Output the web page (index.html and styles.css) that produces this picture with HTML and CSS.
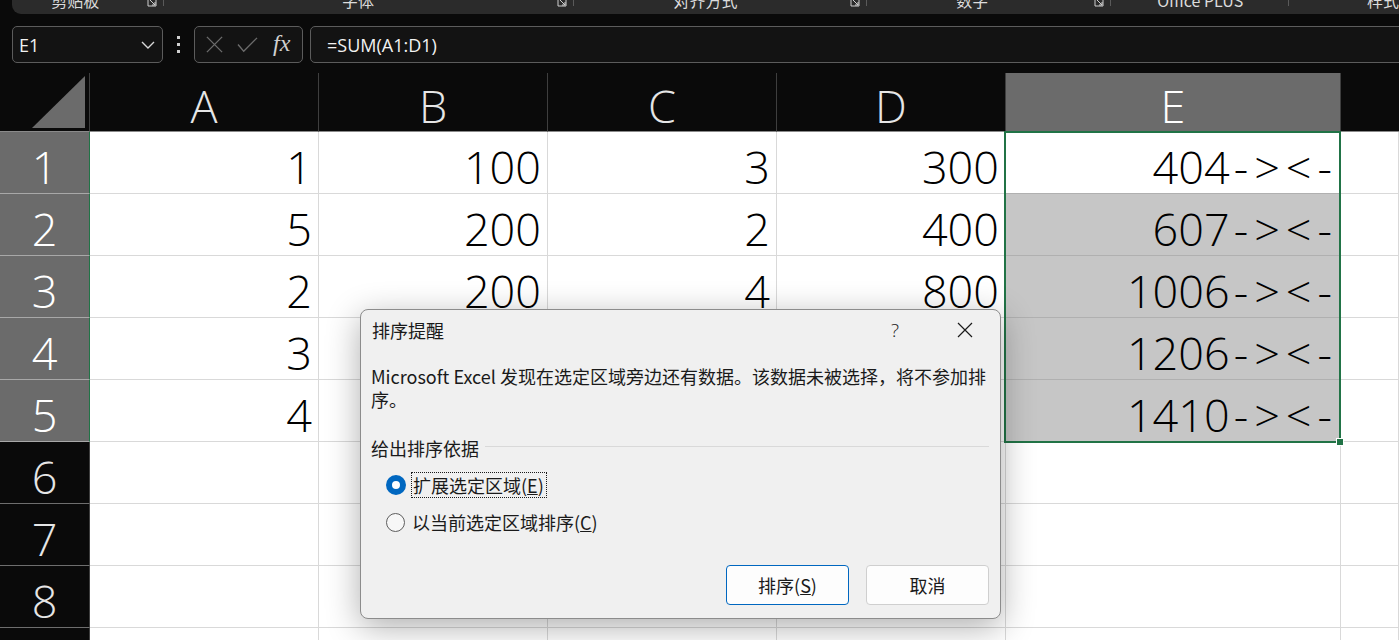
FILE: index.html
```html
<!DOCTYPE html>
<html lang="zh-CN">
<head>
<meta charset="utf-8">
<title>Excel 排序提醒</title>
<link rel="stylesheet" href="styles.css">
</head>
<body>
<div class="ribbon">
  <div class="grp g1"><span class="lbl">剪贴板</span><svg class="launch" viewBox="0 0 10 10"><path d="M1 1h8v8h-8z M3 3l5 5 M5 8h3v-3" fill="none" stroke="#cfcfcf" stroke-width="1"/></svg></div>
  <div class="grp g2"><span class="lbl">字体</span><svg class="launch" viewBox="0 0 10 10"><path d="M1 1h8v8h-8z M3 3l5 5 M5 8h3v-3" fill="none" stroke="#cfcfcf" stroke-width="1"/></svg></div>
  <div class="grp g3"><span class="lbl">对齐方式</span><svg class="launch" viewBox="0 0 10 10"><path d="M1 1h8v8h-8z M3 3l5 5 M5 8h3v-3" fill="none" stroke="#cfcfcf" stroke-width="1"/></svg></div>
  <div class="grp g4"><span class="lbl">数字</span><svg class="launch" viewBox="0 0 10 10"><path d="M1 1h8v8h-8z M3 3l5 5 M5 8h3v-3" fill="none" stroke="#cfcfcf" stroke-width="1"/></svg></div>
  <div class="grp g5"><span class="lbl">Office PLUS</span></div>
  <div class="grp g6"><span class="lbl">样式</span></div>
</div>

<div class="fbar">
  <div class="namebox">
    <span class="ref">E1</span>
    <svg class="chev" viewBox="0 0 14 8"><path d="M1 1l6 6 6-6" fill="none" stroke="#d8d8d8" stroke-width="1.4"/></svg>
  </div>
  <div class="grip"><i></i><i></i><i></i></div>
  <div class="fxbox">
    <svg class="ico" viewBox="0 0 20 20"><path d="M2 2l16 16M18 2L2 18" fill="none" stroke="#6c6c6c" stroke-width="1.4"/></svg>
    <svg class="ico" viewBox="0 0 22 20"><path d="M1 10l6 7L21 3" fill="none" stroke="#6c6c6c" stroke-width="1.4"/></svg>
    <span class="fx">fx</span>
  </div>
  <div class="formula">=SUM(A1:D1)</div>
</div>

<div class="sheet">
  <div class="corner"><svg viewBox="0 0 54 53"><path d="M53 0V52H0z" fill="#6b6b6b"/></svg></div>
  <div class="ch">A</div><div class="ch">B</div><div class="ch">C</div><div class="ch">D</div><div class="ch on">E</div><div class="ch blank"></div>

  <div class="rh on">1</div><div class="c">1</div><div class="c">100</div><div class="c">3</div><div class="c">300</div><div class="c e act">404<span class="sfx">-&gt;&lt;-</span></div><div class="c"></div>
  <div class="rh on">2</div><div class="c">5</div><div class="c">200</div><div class="c">2</div><div class="c">400</div><div class="c e">607<span class="sfx">-&gt;&lt;-</span></div><div class="c"></div>
  <div class="rh on">3</div><div class="c">2</div><div class="c">200</div><div class="c">4</div><div class="c">800</div><div class="c e">1006<span class="sfx">-&gt;&lt;-</span></div><div class="c"></div>
  <div class="rh on">4</div><div class="c">3</div><div class="c">300</div><div class="c">3</div><div class="c">900</div><div class="c e">1206<span class="sfx">-&gt;&lt;-</span></div><div class="c"></div>
  <div class="rh on">5</div><div class="c">4</div><div class="c">400</div><div class="c">6</div><div class="c">1000</div><div class="c e last">1410<span class="sfx">-&gt;&lt;-</span></div><div class="c"></div>
  <div class="rh">6</div><div class="c"></div><div class="c"></div><div class="c"></div><div class="c"></div><div class="c"></div><div class="c"></div>
  <div class="rh">7</div><div class="c"></div><div class="c"></div><div class="c"></div><div class="c"></div><div class="c"></div><div class="c"></div>
  <div class="rh">8</div><div class="c"></div><div class="c"></div><div class="c"></div><div class="c"></div><div class="c"></div><div class="c"></div>
  <div class="rh">9</div><div class="c"></div><div class="c"></div><div class="c"></div><div class="c"></div><div class="c"></div><div class="c"></div>

  <div class="sel"><i class="handle"></i></div>
</div>

<div class="dialog">
  <div class="dtitle">
    <span class="ttext">排序提醒</span>
    <span class="help">?</span>
    <span class="close"><svg viewBox="0 0 16 16"><path d="M1 1l14 14M15 1L1 15" fill="none" stroke="#1a1a1a" stroke-width="1.2"/></svg></span>
  </div>
  <p class="msg">Microsoft Excel 发现在选定区域旁边还有数据。该数据未被选择，将不参加排序。</p>
  <div class="group"><span>给出排序依据</span><i class="rule"></i></div>
  <div class="opt"><span class="radio checked"></span><span class="olabel focus">扩展选定区域(<u>E</u>)</span></div>
  <div class="opt"><span class="radio"></span><span class="olabel">以当前选定区域排序(<u>C</u>)</span></div>
  <div class="btns">
    <button class="btn primary">排序(<u>S</u>)</button>
    <button class="btn">取消</button>
  </div>
</div>
</body>
</html>
```

FILE: styles.css
```css
* { box-sizing: border-box; }
html, body { margin: 0; padding: 0; }
body {
  width: 1399px;
  height: 640px;
  overflow: hidden;
  background: #0a0a0a;
  font-family: "Open Sans", "Noto Sans", sans-serif;
  position: relative;
}

/* ribbon remnant */
.ribbon {
  display: flex;
  height: 14px;
  margin-left: 12px;
  background: #2b2b2b;
  border-bottom-left-radius: 9px;
  overflow: hidden;
}
.grp {
  position: relative;
  display: flex;
  justify-content: center;
  height: 14px;
}
.grp::after {
  content: "";
  position: absolute;
  right: 0;
  top: 0;
  width: 1px;
  height: 6px;
  background: #5a5a5a;
}
.g1 { width: 154px; padding-right: 26px; }
.g2 { width: 415px; padding-right: 22px; }
.g3 { width: 297px; padding-right: 30px; }
.g4 { width: 247px; padding-right: 34px; }
.g5 { width: 180px; }
.g6 { flex: 1; justify-content: flex-start; padding-left: 78px; }
.g6::after { display: none; }
.lbl {
  font-family: "Noto Sans CJK SC", "Noto Sans", sans-serif;
  font-size: 16px;
  line-height: 16px;
  margin-top: -8px;
  color: #dcdcdc;
  white-space: nowrap;
}
.launch {
  position: absolute;
  right: 7px;
  top: -3px;
  width: 10px;
  height: 10px;
}

/* formula bar */
.fbar {
  display: flex;
  align-items: center;
  height: 37px;
  margin-top: 12px;
  padding-left: 12px;
}
.namebox, .fxbox, .formula {
  height: 37px;
  border: 1px solid #5c5c5c;
  border-radius: 5px;
  background: #131313;
  display: flex;
  align-items: center;
}
.namebox {
  width: 151px;
  padding: 0 7px 0 6px;
  justify-content: space-between;
}
.ref { color: #f2f2f2; font-size: 18px; }
.chev { width: 14px; height: 8px; }
.grip {
  width: 31px;
  display: flex;
  flex-direction: column;
  align-items: center;
  gap: 4px;
}
.grip i { width: 3px; height: 3px; background: #cfcfcf; }
.fxbox {
  width: 109px;
  padding-left: 10px;
  gap: 13px;
}
.ico { width: 19px; height: 19px; }
.ico + .ico { width: 21px; }
.fx {
  font-family: "Liberation Serif", "DejaVu Serif", serif;
  font-style: italic;
  font-size: 24px;
  color: #d0d0d0;
  margin-left: 2px;
  margin-top: -3px;
}
.formula {
  flex: 1;
  margin-left: 7px;
  margin-right: -20px;
  padding-left: 16px;
  color: #f2f2f2;
  font-size: 18px;
}

/* sheet */
.sheet {
  position: relative;
  margin-top: 10px;
  display: grid;
  grid-template-columns: 90px 229px 229px 229px 229px 335px 1fr;
  grid-template-rows: 59px repeat(9, 62px);
  font-weight: 300;
  font-size: 45px;
}
.corner {
  background: #0a0a0a;
  border-right: 1px solid #3e3e3e;
  border-bottom: 1px solid #8a8a8a;
  display: flex;
  align-items: flex-end;
  justify-content: flex-end;
  padding: 0 3px 2px 0;
}
.corner svg { width: 54px; height: 53px; display: block; }
.ch {
  background: #0a0a0a;
  color: #e6e6e6;
  border-right: 1px solid #3e3e3e;
  border-bottom: 1px solid #8a8a8a;
  display: flex;
  align-items: flex-end;
  justify-content: center;
  line-height: 45px;
  padding-bottom: 3px;
}
.ch.on { background: #6b6b6b; color: #ffffff; }
.ch.blank { border-right: none; }
.rh {
  background: #0a0a0a;
  color: #e6e6e6;
  border-right: 1px solid #3e3e3e;
  border-bottom: 1px solid #6e6e6e;
  display: flex;
  align-items: flex-end;
  justify-content: center;
  line-height: 45px;
  padding-bottom: 4px;
}
.rh.on {
  background: #6b6b6b;
  color: #ffffff;
  border-right: 1px solid #217346;
  border-bottom-color: #a8a8a8;
}
.c {
  background: #ffffff;
  color: #000000;
  border-right: 1px solid #d9d9d9;
  border-bottom: 1px solid #d9d9d9;
  display: flex;
  align-items: flex-end;
  justify-content: flex-end;
  line-height: 45px;
  padding: 0 6px 4px 0;
  white-space: nowrap;
}
.c.e { background: #c6c6c6; border-bottom-color: #b0b0b0; border-right-color: #b0b0b0; }
.c.e.act { background: #ffffff; }
.sfx { letter-spacing: 6px; margin-left: 4px; margin-right: -4px; }
.sel {
  position: absolute;
  left: 1004px;
  top: 58px;
  width: 337px;
  height: 312px;
  border: 2px solid #217346;
  pointer-events: none;
}
.handle {
  position: absolute;
  right: -5px;
  bottom: -5px;
  width: 8px;
  height: 8px;
  background: #217346;
  border: 1px solid #ffffff;
}

/* dialog */
.dialog {
  position: absolute;
  left: 360px;
  top: 309px;
  width: 641px;
  height: 310px;
  background: #f0f0f0;
  border: 1px solid #8c8c8c;
  border-radius: 8px;
  box-shadow: 0 8px 34px rgba(0, 0, 0, 0.32);
  font-family: "Noto Sans CJK SC", "Noto Sans", sans-serif;
  font-size: 18px;
  color: #1a1a1a;
  padding: 0 11px 0 10px;
}
.dtitle {
  display: flex;
  align-items: center;
  height: 39px;
  margin-right: -11px;
}
.ttext { flex: 1; padding-left: 1px; }
.help {
  width: 70px;
  text-align: center;
  font-family: "Open Sans", sans-serif;
  font-weight: 300;
  font-size: 19px;
  color: #1a1a1a;
}
.close {
  width: 70px;
  display: flex;
  justify-content: center;
}
.close svg { width: 16px; height: 16px; }
.msg {
  margin: 16px 0 0 0;
  line-height: 23px;
}
.group {
  display: flex;
  align-items: center;
  margin-top: 25px;
  line-height: 24px;
}
.rule {
  flex: 1;
  height: 1px;
  background: #d9d9d9;
  margin-left: 6px;
  margin-top: -4px;
}
.opt {
  display: flex;
  align-items: center;
  height: 26px;
  margin-top: 11px;
  padding-left: 15px;
}
.group + .opt { margin-top: 12px; }
.radio {
  width: 19px;
  height: 19px;
  border-radius: 50%;
  border: 1px solid #5e5e5e;
  background: #f7f7f7;
  margin-right: 5px;
}
.radio.checked {
  border: 6px solid #0067c0;
  background: #ffffff;
  width: 20px;
  height: 20px;
}
.olabel {
  height: 26px;
  line-height: 24px;
  padding: 0 2px 0 1px;
  border: 1px dotted transparent;
}
.olabel.focus { border-color: #1a1a1a; }
.btns {
  display: flex;
  justify-content: flex-end;
  gap: 17px;
  margin-top: 30px;
}
.btn {
  width: 123px;
  height: 40px;
  border: 1px solid #cfcfcf;
  border-radius: 4px;
  background: #fdfdfd;
  font-family: "Noto Sans CJK SC", "Noto Sans", sans-serif;
  font-size: 18px;
  color: #1a1a1a;
  padding: 0;
}
.btn.primary { border-color: #0067c0; }
```
